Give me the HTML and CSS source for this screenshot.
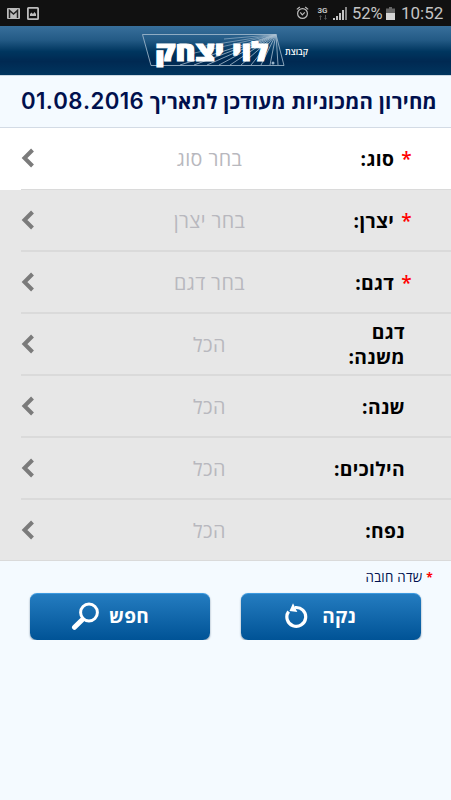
FILE: index.html
```
<!DOCTYPE html>
<html lang="he" dir="rtl">

<head>
    <meta charset="UTF-8">
    <meta name="viewport" content="width=device-width, initial-scale=1.0">
    <title>לוי יצחק</title>
    <link rel="stylesheet" href="styles.css">
</head>

<body>

    <div class="status-bar" dir="ltr">
        <svg class="mail" width="13" height="11" viewBox="0 0 13 11">
            <rect width="13" height="11" rx="1" fill="#bdbdbd"/>
            <path d="M2.5 10V2.5L6.5 6l4-3.5V10" fill="none" stroke="#222" stroke-width="1.5"/>
        </svg>
        <svg class="photo" width="12" height="13" viewBox="0 0 12 13">
            <rect x=".9" y=".9" width="10.2" height="11.2" rx=".6" fill="none" stroke="#bdbdbd" stroke-width="1.8"/>
            <path d="M3 9V7l1.5-1.5L6 7l1.5-2L9 7v2z" fill="#bdbdbd"/>
        </svg>
        <svg class="alarm" width="13" height="14" viewBox="0 0 13 14" fill="none" stroke="#bdbdbd" stroke-width="1.2">
            <circle cx="6.5" cy="7.5" r="4.9"/>
            <path d="M.8 3.4L3.8 1M12.2 3.4L9.2 1M4.3 6.4L6.3 8.8L8.8 6.3"/>
        </svg>
        <div class="network">
            <span>3G</span>
            <svg width="8" height="5" viewBox="0 0 8 5" fill="#555"><path d="M0 2L1.5 0L3 2H2v3H1V2zM5 3L6.5 5L8 3H7V0H6v3z"/></svg>
        </div>
        <svg class="signal" width="14" height="13" viewBox="0 0 14 13" fill="#c4c4c4">
            <path d="M0 11h2v2H0zM3 9h2v4H3zM6 6h2v7H6zM9 3h2v10H9z"/>
            <path d="M12 0h2v13h-2z" fill="#858585"/>
        </svg>
        <span class="percent">52%</span>
        <svg class="battery" width="9" height="13" viewBox="0 0 9 13">
            <path d="M3 0h3v1.5h3V7H0V1.5h3z" fill="#666"/>
            <path d="M0 6h9v7H0z" fill="#d5d5d5"/>
        </svg>
        <span class="clock">10:52</span>
    </div>

    <header class="header">
        <svg width="451" height="49" viewBox="0 0 451 49">
            <g fill="none" stroke="#a9bfd1" stroke-width=".8">
                <path d="M151 39.5L142.5 8.5H276L284 39.5z"/>
                <path d="M276 8.5L180 39M276 8.5L194 39M276 8.5L207 39M276 8.5L219 39M276 8.5L230 39M276 8.5L241 39M276 8.5L251 39M276 8.5L261 39M276 8.5L270 39M276 8.5L278 39"/>
                <path d="M276 8.5L205 20M276 8.5L224 13M276 8.5L190 28" stroke-width=".6"/>
            </g>
            <text class="logo" x="211.5" y="35" textLength="113" lengthAdjust="spacingAndGlyphs">לוי יצחק</text>
            <circle cx="273" cy="37" r="1.5" fill="#9ab4ca"/>
            <text class="group" x="296.5" y="28.5" textLength="23" lengthAdjust="spacingAndGlyphs">קבוצת</text>
        </svg>
    </header>

    <h1 class="title">מחירון המכוניות מעודכן לתאריך <span>01.08.2016</span></h1>

    <div class="fields">
        <div class="field active">
            <div class="label required"><b>*</b>סוג:</div>
            <div class="value">בחר סוג</div>
            <svg class="arrow" viewBox="0 0 14 20"><path d="M11.5 2L3.5 10l8 8"/></svg>
        </div>
        <div class="field">
            <div class="label required"><b>*</b>יצרן:</div>
            <div class="value">בחר יצרן</div>
            <svg class="arrow" viewBox="0 0 14 20"><path d="M11.5 2L3.5 10l8 8"/></svg>
        </div>
        <div class="field">
            <div class="label required"><b>*</b>דגם:</div>
            <div class="value">בחר דגם</div>
            <svg class="arrow" viewBox="0 0 14 20"><path d="M11.5 2L3.5 10l8 8"/></svg>
        </div>
        <div class="field">
            <div class="label">דגם<br>משנה:</div>
            <div class="value">הכל</div>
            <svg class="arrow" viewBox="0 0 14 20"><path d="M11.5 2L3.5 10l8 8"/></svg>
        </div>
        <div class="field">
            <div class="label">שנה:</div>
            <div class="value">הכל</div>
            <svg class="arrow" viewBox="0 0 14 20"><path d="M11.5 2L3.5 10l8 8"/></svg>
        </div>
        <div class="field">
            <div class="label">הילוכים:</div>
            <div class="value">הכל</div>
            <svg class="arrow" viewBox="0 0 14 20"><path d="M11.5 2L3.5 10l8 8"/></svg>
        </div>
        <div class="field">
            <div class="label">נפח:</div>
            <div class="value">הכל</div>
            <svg class="arrow" viewBox="0 0 14 20"><path d="M11.5 2L3.5 10l8 8"/></svg>
        </div>
    </div>

    <div class="note"><b>*</b> שדה חובה</div>

    <div class="buttons">
        <button class="button clear">
            <span>נקה</span>
            <svg width="24" height="26" viewBox="0 0 24 26">
                <path d="M3.6 8.5A9.4 9.4 0 1 0 10 4.6" fill="none" stroke="#fff" stroke-width="3.2"/>
                <path d="M4.5 8L8 .2L12.3 9z" fill="#fff"/>
            </svg>
        </button>
        <button class="button search">
            <span>חפש</span>
            <svg width="28" height="28" viewBox="0 0 28 28" fill="none" stroke="#fff">
                <circle cx="18" cy="10.5" r="8.4" stroke-width="3"/>
                <path d="M11.5 17.5L3.5 25.3" stroke-width="5" stroke-linecap="round"/>
            </svg>
        </button>
    </div>

</body>

</html>
```
FILE: styles.css
```
* {
    box-sizing: border-box;
}

body {
    margin: 0;
    background: #f4faff;
    font-family: "Open Sans", "Noto Sans", sans-serif;
}

.status-bar {
    display: flex;
    align-items: center;
    height: 26px;
    padding: 0 8px 0 7px;
    background: #111;
    color: #c4c4c4;
    font-family: Roboto, sans-serif;
    font-size: 18px;
    line-height: 27px;
}

.photo {
    margin-left: 7px;
}

.alarm {
    margin-left: auto;
    margin-right: 8px;
}

.network {
    display: flex;
    flex-direction: column;
    align-items: center;
    gap: 1px;
    width: 11px;
    margin-right: 5px;
    font-size: 8px;
    font-weight: bold;
    line-height: 7px;
}

.percent {
    width: 31px;
    margin-left: 5px;
    font-size: 16.5px;
}

.battery {
    margin-left: 3px;
    margin-right: 6px;
}

.clock {
    width: 42px;
    font-size: 17px;
}

.header {
    height: 49px;
    background: linear-gradient(#386f9b 0, #245b86 28%, #00365f 52%, #002952 72%, #00355e 100%);
}

.header svg {
    display: block;
    direction: rtl;
}

.logo {
    fill: #fff;
    stroke: #fff;
    stroke-width: 1.1px;
    font-size: 26px;
    font-weight: 800;
    text-anchor: middle;
}

.group {
    fill: #fff;
    font-size: 9px;
    font-weight: 600;
    text-anchor: middle;
}

.title {
    height: 53px;
    margin: 0;
    padding: 0 14px 0 0;
    border-top: 1px solid #cbd8e2;
    border-bottom: 1px solid #d3dbe5;
    color: #00104d;
    font-size: 20.5px;
    font-weight: bold;
    letter-spacing: .25px;
    line-height: 50px;
    white-space: nowrap;
}

.title span {
    font-family: Inter, sans-serif;
    font-size: 22.2px;
    font-weight: 600;
    letter-spacing: .4px;
}

.fields {
    background: #e7e7e7;
}

/* divider starts at the arrow and runs to the right edge */
.field {
    display: flex;
    align-items: center;
    height: 62px;
    padding: 0 46px 2px 21px;
    background: linear-gradient(#dadada, #dadada) 21px 100% / 100% 2px no-repeat;
}

.field.active {
    background-color: #fff;
    background-size: 100% 1px;
}

.field:last-child {
    height: 61px;
    padding-bottom: 1px;
    background-position: 0 100%;
    background-size: 100% 1px;
}

.label {
    width: 98px;
    color: #000;
    font-size: 19.3px;
    font-weight: bold;
    letter-spacing: .35px;
    line-height: 25px;
}

.label.required {
    width: 105px;
    margin-right: -7px;
}

.label b {
    margin-left: 7px;
    color: #f00;
    font-size: 19px;
    font-weight: 600;
    line-height: 20px;
}

.value {
    width: 195px;
    color: #b8b8be;
    font-size: 19.8px;
    letter-spacing: .4px;
    text-align: center;
}

.arrow {
    width: 14px;
    height: 20px;
    margin-right: auto;
    fill: none;
    stroke: #7b7b7b;
    stroke-width: 4;
}

.note {
    height: 32px;
    padding-right: 18px;
    color: #00104d;
    font-size: 13.3px;
    letter-spacing: .25px;
    line-height: 32px;
}

.note b {
    color: #f00;
    font-size: 12px;
}

.buttons {
    display: flex;
    justify-content: space-between;
    padding: 0 30px;
}

.button {
    display: flex;
    align-items: center;
    width: 180px;
    height: 47px;
    padding: 0 0 2px;
    border: 0;
    border-top: 1px solid #3d9ae0;
    border-radius: 7px;
    background: linear-gradient(#247cc0, #005396);
    box-shadow: 0 1px 2px #778da0;
    color: #fff;
    font: bold 19px/26px "Open Sans", sans-serif;
    letter-spacing: .3px;
}

.clear {
    gap: 13px;
    padding-right: 65px;
}

.search {
    gap: 10px;
    padding-right: 61px;
}
```
